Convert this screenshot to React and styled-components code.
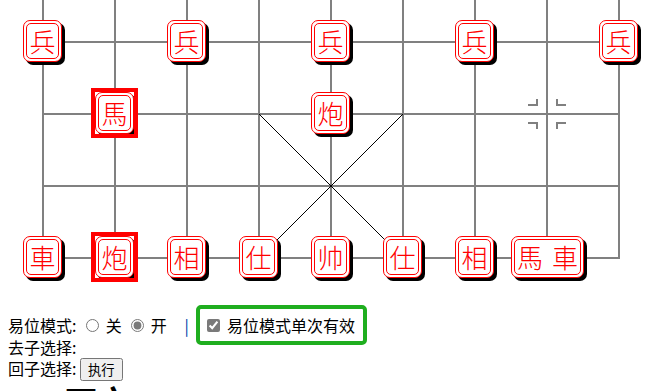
import React from "react";
import styled, { createGlobalStyle } from "styled-components";

const GlobalStyle = createGlobalStyle`
  body {
    margin: 0;
    background: #fff;
    font-family: "Noto Sans CJK SC", "Liberation Sans", sans-serif;
    font-size: 16px;
    color: #000;
  }
`;

const STEP = 72;
const X0 = 43;
const Y0 = 42;

const Board = styled.div`
  position: relative;
  width: 649px;
  height: 315px;
  overflow: hidden;
`;

const Grid = styled.svg`
  display: block;
`;

const Piece = styled.div`
  position: absolute;
  left: ${(p) => X0 + p.$col * STEP - (p.$wide ? 36 : 20)}px;
  top: ${(p) => Y0 + p.$row * STEP - 22}px;
  box-sizing: border-box;
  width: ${(p) => (p.$wide ? 73 : 39)}px;
  height: 42px;
  padding: 2px;
  background: #fff;
  border: 1px solid #f00;
  border-radius: 7px;
  box-shadow: 3px 3px 0 #000;

  &::after {
    content: "";
    display: ${(p) => (p.$selected ? "block" : "none")};
    position: absolute;
    inset: -5px;
    border: 4px solid #f00;
  }
`;

const Face = styled.div`
  box-sizing: border-box;
  height: 100%;
  border: 1px solid #f00;
  border-radius: 5px;
  display: flex;
  align-items: center;
  justify-content: center;
  gap: 9px;
  color: #f00;
  font-family: "Noto Sans CJK SC", sans-serif;
  font-weight: 300;
  font-size: 26px;
  line-height: 1;
`;

const Controls = styled.div`
  padding-left: 8px;
  line-height: 21.5px;
  accent-color: #7a7a7a;
`;

const Row = styled.div``;

const Radio = styled.input.attrs({ type: "radio", name: "swap" })`
  margin: 3px 3px 0 6px;
`;

const Divider = styled.span`
  color: #0040a8;
  margin: 0 4px 0 14px;
`;

const Highlight = styled.label`
  padding: 4px 8px 4px 3px;
  border: 4px solid #1fae1f;
  border-radius: 5px;
`;

const Check = styled.input.attrs({ type: "checkbox" })`
  margin: 3px 3px 3px 4px;
`;

const Button = styled.button`
  font-family: "Noto Sans CJK SC", sans-serif;
  font-size: 13.33px;
  padding: 1px 6px;
  line-height: 17px;
`;

const Heading = styled.h1`
  margin: 0 0 0 65px;
  font-size: 32px;
  line-height: 38px;
  font-weight: bold;
`;

const cols = [0, 1, 2, 3, 4, 5, 6, 7, 8];
const rows = [0, 1, 2, 3];

const pieces = [
  { col: 0, row: 0, text: ["兵"] },
  { col: 2, row: 0, text: ["兵"] },
  { col: 4, row: 0, text: ["兵"] },
  { col: 6, row: 0, text: ["兵"] },
  { col: 8, row: 0, text: ["兵"] },
  { col: 1, row: 1, text: ["馬"], selected: true },
  { col: 4, row: 1, text: ["炮"] },
  { col: 0, row: 3, text: ["車"] },
  { col: 1, row: 3, text: ["炮"], selected: true },
  { col: 2, row: 3, text: ["相"] },
  { col: 3, row: 3, text: ["仕"] },
  { col: 4, row: 3, text: ["帅"] },
  { col: 5, row: 3, text: ["仕"] },
  { col: 6, row: 3, text: ["相"] },
  { col: 7, row: 3, text: ["馬", "車"], wide: true },
];

// cannon position marks: four corner brackets around an intersection
function Marker({ cx, cy }) {
  const gx = 10;
  const gy = 9;
  const h = 9;
  const v = 6;
  const d = [-1, 1]
    .flatMap((sx) =>
      [-1, 1].map((sy) => {
        const x = cx + sx * gx;
        const y = cy + sy * gy;
        return `M${x + sx * h} ${y}H${x}V${y + sy * v}`;
      })
    )
    .join(" ");
  return <path d={d} fill="none" stroke="#808080" strokeWidth="2" />;
}

function BoardLines() {
  const xr = X0 + 8 * STEP;
  const yb = Y0 + 3 * STEP;
  return (
    <Grid width="649" height="315">
      {rows.map((r) => (
        <line key={"h" + r} x1={X0 - 1} x2={xr + 1} y1={Y0 + r * STEP} y2={Y0 + r * STEP} stroke="#808080" strokeWidth="2" />
      ))}
      {cols.map((c) => (
        <line key={"v" + c} x1={X0 + c * STEP} x2={X0 + c * STEP} y1={0} y2={yb + 1} stroke="#808080" strokeWidth="2" />
      ))}
      <line x1={X0 + 3 * STEP} y1={Y0 + STEP} x2={X0 + 5 * STEP} y2={yb} stroke="#000" strokeWidth="1" />
      <line x1={X0 + 5 * STEP} y1={Y0 + STEP} x2={X0 + 3 * STEP} y2={yb} stroke="#000" strokeWidth="1" />
      <Marker cx={X0 + 7 * STEP} cy={Y0 + STEP} />
    </Grid>
  );
}

export default function App() {
  return (
    <>
      <GlobalStyle />
      <Board>
        <BoardLines />
        {pieces.map((p, i) => (
          <Piece key={i} $col={p.col} $row={p.row} $wide={p.wide} $selected={p.selected}>
            <Face>
              {p.text.map((t, j) => (
                <span key={j}>{t}</span>
              ))}
            </Face>
          </Piece>
        ))}
      </Board>
      <Controls>
        <Row>
          易位模式: <Radio /> 关 <Radio defaultChecked /> 开 <Divider>|</Divider>{" "}
          <Highlight>
            <Check defaultChecked /> 易位模式单次有效
          </Highlight>
        </Row>
        <Row>去子选择:</Row>
        <Row>
          回子选择: <Button>执行</Button>
        </Row>
      </Controls>
      <Heading>下方</Heading>
    </>
  );
}
